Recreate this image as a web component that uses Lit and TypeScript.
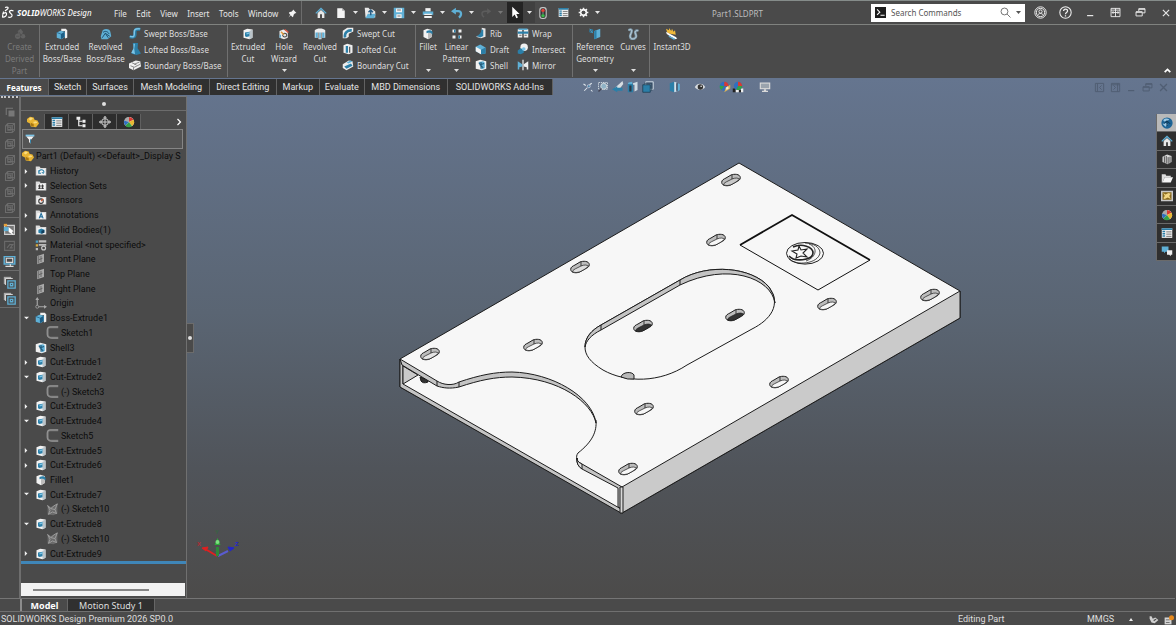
import { LitElement, html, css, svg, nothing } from "lit";
import { customElement, property } from "lit/decorators.js";
import { classMap } from "lit/directives/class-map.js";

const B = "#5fb0d6";
const D = "#2b7fa8";
const W = "#e8e8e8";

const folder = (inner: unknown) => svg`
  <path fill="#dcdcdc" d="M1 2h5l1.500 2H15v10H1z"/>
  <path fill="#f6f6f6" d="M3 5.500h10.500v7.500H3z"/>${inner}`;

const ICONS: Record<string, unknown> = {
  home: svg`<path fill=${W} d="M3.500 8 8 4l4.500 4v6.500h-9z"/><path fill="#4a4a4a" d="M6.700 9.500h2.600v5H6.700z"/><path fill="none" stroke=${B} stroke-width="1.800" d="M1 8.500 8 2l7 6.500"/>`,
  page: svg`<path fill="#f4f4f4" d="M3 1.500h6.500l3.500 3.500v9.500H3z"/><path fill="#a8a8a8" d="M9.500 1.500v3.500H13z"/>`,
  open: svg`<path fill=${W} d="M1 1h5l1.500 2H11l4 3v8H2z"/><path fill=${B} d="M2 15 5 9h10.500l-2 6z"/><path fill="none" stroke="#2b5f86" stroke-width="2" d="M9 11V5M6 7l3-3 3 3"/>`,
  save: svg`<path fill=${B} d="M1 1h14v14H1z"/><path fill="#f2f2f2" d="M4 2h8v5H4zM4.500 9.500h7v5h-7z"/><path stroke="#4a4a4a" stroke-width="1" d="M5.500 4h5M6 12h4"/>`,
  print: svg`<path fill="#f2f2f2" d="M4.500 1.500h7V6h-7z"/><path fill=${B} d="M1 6h14v4.500H1z"/><path fill="#f2f2f2" d="M3 9h10v1.500H3zM3 12h10v2.500H3z"/>`,
  undo: svg`<path fill="none" stroke=${B} stroke-width="3" d="M4 5.500h5.500c5 0 5 6 1 8.500"/><path fill=${B} d="M0 5.500 6.500 1v9z"/>`,
  redo: svg`<path fill="none" stroke="#5c5c5c" stroke-width="2" d="M12 5.500H6.500c-5 0-5 6-1 8"/><path fill="#5c5c5c" d="M15 5.500 9.500 1.500v8z"/>`,
  cursor: svg`<path fill="#fff" d="M4 1v12.500l3-3 2 4.500 2-1-2-4.300h4z"/>`,
  traffic: svg`<rect x="3" y="0" width="10" height="16" rx="4" fill="#c4c4c4"/><rect x="4.500" y="1.500" width="7" height="13" rx="3" fill="#333"/><circle cx="8" cy="4.500" r="2.300" fill="#e04038"/><circle cx="8" cy="8" r="1.200" fill="#777"/><circle cx="8" cy="11.600" r="2.300" fill="#3bb54a"/>`,
  list: svg`<path fill="#f0f0f0" d="M1 1.500h14v13H1z"/><path fill=${D} d="M1 1.500h14v2.500H1zM2 5h3.500v2H2zM2 8h3.500v2H2zM2 11h3.500v2H2z"/><path stroke="#555" d="M7 6.500H14M7 9.500H14M7 12.500H14"/>`,
  gear: svg`<circle cx="8" cy="8" r="4" fill="none" stroke="#f4f4f4" stroke-width="2.600"/><path stroke="#f4f4f4" stroke-width="2.200" d="M8 1v3M8 12v3M1 8h3M12 8h3M3 3l2 2M11 11l2 2M13 3l-2 2M5 11l-2 2"/><circle cx="8" cy="8" r="2.600" fill="#4a4a4a"/>`,
  pin: svg`<path fill="#f4f4f4" d="m9 1 6 6-1.500.7-1-.2-2.500 2.500-.5 3L8 14.500 5 11l-4 4 3-5L1.500 7l1.500-1.500 3-.5L8.500 2.500z"/>`,
  user: svg`<g fill="none" stroke="#f0f0f0" stroke-width="1.200"><circle cx="8" cy="8" r="7"/><circle cx="8" cy="8" r="5"/><circle cx="8" cy="6.800" r="2"/><path d="M4.500 11.500c1-3 6-3 7 0"/></g>`,
  help: svg`<g fill="none" stroke="#f0f0f0" stroke-width="1.300"><circle cx="8" cy="8" r="7"/><path stroke-width="1.600" d="M5.700 6.300c0-3.300 4.800-3.200 4.800-.3C10.500 8 8 7.800 8 10M8 11.300v1.500"/></g>`,
  min: svg`<path stroke="currentColor" stroke-width="1.800" d="M3 12.500h9"/>`,
  span: svg`<g fill="none" stroke="#f0f0f0" stroke-width="1.300"><path d="M1.500 2h13v12h-13zM8 2v12M3 8h10M5 6 3 8l2 2M11 6l2 2-2 2M1.500 4.500h13"/></g>`,
  restore: svg`<g fill="none" stroke="currentColor" stroke-width="1.400"><path d="M5.500 6V2.500h9v6H11M1.500 7h9v6h-9z"/><path stroke-width="2" d="M5.500 3h9M1.500 7.500h9"/></g>`,
  close: svg`<path fill="none" stroke="currentColor" stroke-width="1.900" d="m3 3 10 10M13 3 3 13"/>`,
  prompt: svg`<path fill="#1d1d1d" d="M0 0h16v16H0z"/><path fill="none" stroke="#fff" stroke-width="1.600" d="m3 3.500 4 4-4 4M8 12h6"/>`,
  search: svg`<g fill="none" stroke="#5a5a5a" stroke-width="1.200"><circle cx="6.500" cy="6.500" r="5"/><path d="m10.300 10.300 5 5"/></g>`,
  up: svg`<path fill="none" stroke="#fff" stroke-width="3" d="m3 11 5-5 5 5"/>`,
  next: svg`<path fill="none" stroke="#fff" stroke-width="2.400" d="m5 2 6 6-6 6"/>`,
  derived: svg`<g fill="#626262"><path d="M5 4 9 1l3 4-1 3-5 1z"/><circle cx="5" cy="11" r="3.600"/><circle cx="12" cy="11" r="3"/></g><path stroke="#505050" fill="none" d="m6 5 5 6M3 11h4"/>`,
  extrude: svg`<path fill="#f0f0f0" d="M7 1h6l2 2v10l-3 1V4H7z"/><path fill=${B} d="m1 6 5-2.500 6 1.500v7l-5 3-6-2z"/><path fill="#1e5e85" d="m6.500 8 5-3v7l-5 3z"/><path fill="none" stroke="#1e5e85" d="m1 6 5.500 2"/>`,
  revolve: svg`<path fill=${B} d="M3 5c0-5 11-5 11 1l1 5-5 4H2l-1-4z"/><path fill="none" stroke="#20506e" stroke-width="1.300" d="M4 6c3-3 7-1 8 2M3 13l4-6 4 6M7 7l6 4"/>`,
  swept: svg`<path fill="none" stroke=${D} stroke-width="4.200" d="M1 13c8 2 7-2 7-5s-1-6 7-5"/><path fill="none" stroke="#7cc4e6" stroke-width="2" d="M1 12.500c7 2 6-2 6-5s0-6 8-5"/>`,
  loft: svg`<path fill=${D} d="M5 0h7l-.5 7 4.500 7-6 2-7-2 3-7z"/><path fill="#7cc4e6" d="M6 1h2L7 8l1 7-5-2 3-6z"/>`,
  boundary: svg`<path fill="#f0f0f0" d="m0 6 9-4 6 1 1 7-10 5-6-3z"/><path fill="none" stroke="#777" stroke-width="1.100" d="m2 9 5 2 8-4M7 7l7-3M6 11v4M4 5l6 3"/>`,
  cut: svg`<path fill="#f2f2f2" d="m2 3 5-2 7 1v11l-4 2-8-2z"/><path fill="#b9c3c9" d="m10 4 4-2v11l-4 2z"/><path fill=${D} d="m4 6 6-1v6l-4 1-2-1z"/><path fill="#7cc4e6" d="m6 6.500 4-1v2l-4 1z"/>`,
  wizard: svg`<path fill="#ececec" d="m2 4 5-2 6 2v9l-5 2-6-2z"/><circle cx="9" cy="9.500" r="3.200" fill="#444"/><circle cx="9" cy="9.500" r="1.800" fill="#e6e6e6"/><path stroke="#e09a3c" stroke-width="2" d="m4 5 4 4"/><path stroke="#d9513c" stroke-width="2" d="m9 2 5 4"/><path stroke=${B} stroke-width="2" d="M3 9v4"/>`,
  revcut: svg`<path fill="#eee" d="M1 3c3-3 11-3 14 0v10h-4V6h-1v9H6V6H5v7H1z"/><path fill=${B} d="M2 6h3v7H2zM11 6h3v7h-3zM7 6h2v8H7z"/>`,
  sweptcut: svg`<path fill="#eee" d="M1 5 7 1h8v5l-6 3v4l-3 2H1z"/><path fill="none" stroke=${D} stroke-width="3.500" d="M4 14C3 8 7 4 13 4.500"/>`,
  loftcut: svg`<path fill="#eee" d="m2 3 5-2 7 2v10l-5 2-7-2z"/><path fill=${D} d="M5 4h3v9H5z"/><path fill="#4a4a4a" d="M9.500 5H11v8H9.500z"/>`,
  boundcut: svg`<path fill="#eee" d="m1 7 8-5 5 1 1 7-9 5-5-3z"/><path fill=${D} d="m3 10 9-4 2 3-8 4z"/><path fill=${B} d="m6 5 5-3 3 1-5 3z"/>`,
  fillet: svg`<path fill="#f2f2f2" d="m2 3 5-2 6 1.500v9.500l-5 3-6-3z"/><path fill="#bdbdbd" d="m8 7 5-3v8l-5 3z"/><path fill=${D} d="M6 4c4-2 7-1 8 1v4c-2-3-4-3-8-2z"/>`,
  linear: svg`<g fill="#f0f0f0"><path d="M2 2h4v4H2zM10 2h4v4h-4zM2 10h4v4H2zM10 10h4v4h-4z"/></g><g fill=${D}><path d="M4 2h2v4H4zM10 10h2v4h-2z"/></g>`,
  rib: svg`<path fill="#e6e6e6" d="m9 1 5 1v11l-6 2-7-2 8-2z"/><path fill=${D} d="M2 12C7 10 8 7 9 3l2 1v8l-4 2z"/>`,
  draft: svg`<path fill=${B} d="m1 5 6-3 7 4v8l-6 1-7-4z"/><path fill="#f2f2f2" d="m1 5 7 4v6l-7-4z"/><path fill=${D} d="m8 9 6-3v8l-6 1z"/>`,
  shell: svg`<path fill="#f0f0f0" d="m1 3 6-2 8 2v10l-6 2-8-2z"/><path fill=${B} d="m5 4 6-1 2 2v7l-4 2z"/><path fill="none" stroke="#225a7a" stroke-width="1.400" d="m5 5 6 7M8 4v9M6 8l6-2"/>`,
  wrap: svg`<path fill="#eee" d="M1 3h6v11H1zM9 3h6v11H9z"/><path fill=${D} d="M1 6h14v3H1z"/><path stroke="#333" fill="none" d="M3 11h3M10 11h3"/><path fill=${B} d="M2 2h12v2H2z"/>`,
  intersect: svg`<circle cx="9.500" cy="5.500" r="5" fill="#f0f0f0"/><path fill=${D} d="m1 10 4-3 4 2v4l-4 2-4-1z"/><circle cx="9" cy="8" r="2.400" fill="#7cc4e6"/>`,
  mirror: svg`<path stroke="#f0f0f0" stroke-width="1.600" d="M8 1v14"/><path fill=${B} d="M1 3l6 4v3l-4 1v3H1z"/><path fill="#eee" d="M15 3 9 7v3l4 1v3h2z"/>`,
  refgeo: svg`<path fill=${B} d="m7 4 8-3v11l-8 3z"/><path fill=${D} d="m7 4 3-1v11l-3 1z"/><circle cx="3" cy="4" r="2" fill="none" stroke=${D} stroke-width="1.500"/><path stroke=${B} d="M1 1l4 6"/>`,
  curves: svg`<path fill="none" stroke="#7d97a8" stroke-width="3.400" d="M2 3c5-3 5 1 3 5s0 8 5 6 0-7 1-9 3-2 4-1"/><path fill="none" stroke="#bdd3de" stroke-width="1.200" d="M2 3c5-3 5 1 3 5s0 8 5 6 0-7 1-9 3-2 4-1"/>`,
  instant: svg`<path fill="#f0b93a" d="M0 1 4 3V0l3 4 1-3 2 4 2-2 1 6L2 7z"/><path fill="#fff" d="m0 5 13 7 2 2-3 1L1 8z"/><path fill=${B} d="m3 10 9 4-1 2-7-4z"/>`,
  zoomfit: svg`<path fill="none" stroke="#e0e8ee" stroke-width="1.400" d="m3 13 4-4M2 4l3 2M12 12l2 2M13 3l-3 2"/><circle cx="9" cy="7" r="2" fill="#4a86a8" stroke="#ccd"/>`,
  zoomarea: svg`<path fill="none" stroke="#cfd8df" stroke-dasharray="2 1" stroke-width="1.200" d="M2 2h12v9H2z"/><circle cx="9" cy="7" r="4" fill="#8fb2c6" stroke="#e4e4e4"/><path stroke="#445" stroke-width="2" d="m6 10-4 4"/>`,
  prev: svg`<path fill="#d7dde2" d="m14 0-10 9 5 3 6-8z"/><path fill=${D} d="m0 11 7-4v2h7v4H7v2z"/>`,
  section: svg`<path fill=${D} d="M1 4h7v11H1z"/><path fill="#2a3a48" d="M3 6h3v8H3z"/><path fill="#cfdce4" d="M8 3l6-2v11l-4 2V5H8z"/><path fill=${B} d="m2 2 5-1v3H1z"/>`,
  orient: svg`<path fill="none" stroke="#cfdce4" stroke-width="1.200" d="M5 1h10v10H5z"/><path fill=${D} d="M1 5h10v10H1z"/><path stroke="#1c3a4e" fill="none" d="M1 5h10v10H1zM3 3h10v10"/>`,
  display: svg`<path fill=${D} d="m1 3 6-2v14l-6-2z"/><path fill="#cfe4ef" d="M7 1l3 1v12l-3 1z"/><path fill="#223" d="M10 3h1.500v10H10z"/><path fill=${B} d="m11.500 3 3 1v8l-3 2z"/>`,
  eye: svg`<path fill="#d8dce0" d="M1 8c3-6 11-6 14 0-3 5-11 5-14 0z"/><circle cx="8.500" cy="8" r="3.600" fill="#333"/><circle cx="9.500" cy="7" r="1" fill="#fff"/>`,
  ball: svg`<circle cx="8" cy="8" r="6.800" fill="#f2f2f2"/><path fill="#d83a33" d="M8 8V1.200A6.800 6.800 0 0 1 14 5z"/><path fill="#e8b832" d="M8 8l6-3a6.800 6.800 0 0 1-2 8.500z"/><path fill="#35a046" d="m8 8 4 5.500a6.800 6.800 0 0 1-9-1z"/><path fill="#2f6fc0" d="M8 8l-5 4.500A6.800 6.800 0 0 1 1.500 6z"/><path fill="#222" d="M8 8 1.500 6A6.800 6.800 0 0 1 8 1.200z" opacity=".35"/>`,
  scene: svg`<path fill="#222" d="M1 10h4v5H1zM9 12h3v3H9z"/><path fill="#eee" d="M5 11h4v4H5zM12 10h3v5h-3z"/><circle cx="8" cy="6.500" r="5.500" fill="#2f6fc0"/><path fill="#d83a33" d="M8 6.500V1a5.500 5.500 0 0 1 5.500 5.500z"/><path fill="#35a046" d="M8 6.500h5.500a5.500 5.500 0 0 1-8 5z"/>`,
  appear: svg`<circle cx="7" cy="7" r="6" fill="#2f6fc0"/><path fill="#d83a33" d="M7 7V1a6 6 0 0 1 6 6z"/><path fill="#35a046" d="M7 7 3 12a6 6 0 0 1-2-6z"/><path fill="#d7b25a" d="m7 15 2-6 6-4v5z"/><path fill="#f2e9d0" d="m9 9 3-2 1 3-3 2z"/>`,
  monitor: svg`<path fill="#d9d9d9" d="M1 2h14v9H1z"/><path fill="#9aa3ad" d="M2.500 3.500h11v6h-11z"/><path fill="#d9d9d9" d="M6.500 11h3v2h-3zM4 13h8v1.500H4z"/>`,
  dockl: svg`<path fill="none" stroke="currentColor" stroke-width="1.400" d="M2 2h12v12H2zM5 2v12M11 5 8 8l3 3"/>`,
  dockr: svg`<path fill="none" stroke="currentColor" stroke-width="1.400" d="M2 2h12v12H2zM11 2v12M5 5l3 3-3 3M2 4h12"/>`,
  part: svg`<path fill="#e8b432" d="m0 4 4-3 5 1 1 3 4 1 2 4-4 5-7-1-1-4-4-2z"/><path fill="#f9dc82" d="m2 4 3-2 3 1-3 3zM8 8l4-1 2 2-4 1z"/><path fill="#a97712" d="m5 9 4 2v3l-4-1z"/>`,
  tree: svg`<path fill="none" stroke="#eee" stroke-width="1.600" d="M5 4v9h5M5 7h5"/><path fill="#eee" d="M2 1h5v4H2zM10 5h4v4h-4zM10 11h4v4h-4z"/>`,
  target: svg`<g fill="none" stroke="#cfcfcf" stroke-width="1.300"><circle cx="8" cy="8" r="4.500"/><path d="M8 .5v15M.5 8h15M8 .5 10 3M8 .5 6 3M8 15.500 10 13M8 15.500 6 13M.5 8 3 6M.5 8 3 10M15.500 8 13 6M15.500 8 13 10"/></g>`,
  funnel: svg`<path fill="#7cc4e6" d="M1 1h14v3H1z"/><path fill="#f4f4f4" d="M2 4h12L9.500 9v6l-3-2V9z"/><path fill=${D} d="M9.500 9v6l-1.500-1V7z"/>`,
  history: folder(svg`<path fill="none" stroke=${D} stroke-width="1.400" d="M5 11c0-6 7-6 7-1M12 11l-3-1M5 7v4h3"/>`),
  selset: folder(svg`<path fill="none" stroke="#333" stroke-width="1.200" d="M4 8h8M4 11h8M6 6v6M10 6v6"/>`),
  sensors: folder(svg`<circle cx="8" cy="9.500" r="3" fill="none" stroke="#333" stroke-width="1.400"/><path stroke="#d8532c" stroke-width="1.600" d="m8 9.500 3-3"/>`),
  annot: folder(svg`<path fill="none" stroke="#246f9c" stroke-width="1.500" d="m5.500 12.500 2.700-6.500 2.700 6.500M6.500 10.500h3.400"/>`),
  solid: folder(svg`<path fill=${D} d="m4.500 7.500 4-1.500 4 1.500v4l-4 1.500-4-1.500z"/><path fill="#123e5c" d="m8.500 9 4-1.500v4l-4 1.500z"/>`),
  material: svg`<path fill="#49a0c9" d="M1 2h3v3H1z"/><path fill="#d8a93a" d="M1 7h3v3H1z"/><path fill="#bbb" d="M1 12h3v3H1zM5 1.500H15v3H5zM5 6.500H15v2.500H5z"/><circle cx="11.500" cy="12" r="2.600" fill="#4a4a4a" stroke="#c8c8c8" stroke-width="1.600"/>`,
  plane: svg`<path fill="#a9a9a9" d="m3 4 9-3v11l-9 3z"/><path fill="none" stroke="#5b5b5b" stroke-width="1.100" d="M5 4v10M8 4v8M5 9l5-2"/>`,
  origin: svg`<path fill="none" stroke="#a8a8a8" stroke-width="1.500" d="M3 2v11h10"/><path fill="#a8a8a8" d="m.5 4 2.500-4 2.500 4zM12 10.500l4 2.500-4 2.500z"/><circle cx="3" cy="13" r="2" fill="#4a4a4a" stroke="#a8a8a8"/>`,
  sketch: svg`<path fill="none" stroke="#7e7e7e" stroke-width="2.400" d="M15 1.500H5Q2 1.500 2 5v5q0 4.500 5 4.500h8"/><path fill="none" stroke="#a4a4a4" stroke-width=".8" d="M15 1H5Q1.500 1 1.500 5v5q0 5 5.500 5h8"/>`,
  sketchx: svg`<path fill="#6b6b6b" d="M2 3l4 2 4-2 4-2v12l-5 2-7-1z"/><path fill="none" stroke="#a8a8a8" stroke-width="1" d="m2 3 4 4 3-3 5-3-3 7 2 5-5-2-5 3 2-5zM6 7l5 1"/>`,
  view: svg`<path fill="none" stroke="#6c6c6c" stroke-width="1.400" d="m2 5 3-3h9v9l-3 3H2zM2 5h9v9M11 5l3-3M5 2v8h8M5 7h4v4H5z"/>`,
  viewfull: svg`<path fill="#777" d="M6 6h8v8H6z"/><path fill="none" stroke="#777" stroke-width="1.400" d="M3 12V3h9"/>`,
  pen: svg`<path fill="#777" stroke="#d0d0d0" stroke-width="1.400" d="M2 3h12v11H2z"/><path fill=${B} d="M1 5h6v5H1z"/><path fill="#e9a33c" d="M1 1h4v3H1z"/><path fill="#fff" d="m7 5 6 5-2 1 2 4-6-4z"/>`,
  g2: svg`<path fill="none" stroke="#6a6a6a" stroke-width="1.400" d="M2 3h12v11H2zM5 11l4-5M9 7h3l-3 4h3"/>`,
  screen: svg`<path fill="none" stroke=${B} stroke-width="1.800" d="M1.500 2h13v9h-13z"/><path fill="none" stroke="#ddd" stroke-width="1.400" d="M4 4h8v5H4zM3 14h10M9 11v3"/>`,
  copy: svg`<path fill="#aaa" d="M1 1h9v9H1z"/><path fill="#4a4a4a" d="M3 3h9v9H3z"/><path fill="none" stroke="#ddd" stroke-width="1.200" d="M3 11V3h9"/><path fill="#4a4a4a" stroke=${B} stroke-width="1.600" d="M6 6h9v9H6zM9 9h3v3H9z"/>`,
  globe: svg`<circle cx="8" cy="8" r="7.500" fill="#1d6496"/><path fill="#9cc8e4" d="M3 4c3-3 6-2 8-1L9 5 4 6zM2 9l5-1 2 2-3 3z"/><path fill="none" stroke="#0c3350" stroke-width="1.300" d="m4 9 4-4 4 4M8 5v7"/>`,
  library: svg`<path fill="#d8d8d8" d="m2 5 6-3 6 2v8l-5 3-7-3z"/><path fill="none" stroke="#444" stroke-width="1.200" d="M4.500 4.500V13M7 4v10M9.500 5.500V15M12 5v8"/>`,
  files: svg`<path fill="#dcdcdc" d="M1 3h5l1 2h6v2H5l-3 7H1z"/><path fill="#f4f4f4" d="M5 7h11l-3 7H2z"/>`,
  palette: svg`<path fill="#c8c8c8" d="M0 1h16v14H0z"/><path fill="#8a6a1c" d="M2 3h12v10H2z"/><path fill="#f1d583" d="m3 4 3 2 4-2 3 1-2 3 2 4-4-2-4 2-2-1 2-3z"/>`,
  chat: svg`<path fill=${B} d="M1 2h9v7H6l-2 2V9H1z"/><path fill="#f0f0f0" d="M8 7h7v6h-2v2l-2-2H8z"/>`,
  tag: svg`<path fill="#d0d0d0" d="M1 2h3l2 4 4-2 5 4-6 5-5-1-3-6z"/><path fill="#4a4a4a" d="m7 8 4-2 1 1-4 3z"/>`,
  note: svg`<path fill="#d4d4d4" d="M1 4h11v11H1z"/><path fill="#555" d="M3 7h6v1.500H3zM3 11h6v1.500H3z"/><circle cx="12" cy="4.500" r="4" fill="#e88a1c"/>`,
};

const icon = (name: string, size = 12) =>
  html`<svg class="ic" width=${size} height=${size} viewBox="0 0 16 16" aria-hidden="true">${ICONS[name]}</svg>`;

const caret = html`<svg class="caret" width="5" height="3" viewBox="0 0 5 3" aria-hidden="true"><path fill="currentColor" d="M0 0h5L2.500 3z"/></svg>`;

const base = css`
  :host, * { box-sizing: border-box; }
  button, input { font: inherit; color: inherit; background: none; border: 0; padding: 0; margin: 0; }
  button { display: flex; align-items: center; justify-content: center; white-space: nowrap; }
  .ic, .caret { display: block; flex: none; }
`;

@customElement("title-bar")
class TitleBar extends LitElement {
  static styles = [base, css`
    :host { display: flex; align-items: stretch; height: 25px; flex: none; border-top: 1px solid #858c8a; border-bottom: 1px solid #80827f; color: #e6e6e6; font-size: 8px; }
    .brand { display: flex; align-items: center; gap: 3px; padding-left: 1px; width: 109px; font-style: italic; white-space: nowrap; color: #fff; }
    .menus { display: flex; align-items: center; justify-content: space-between; width: 193px; padding: 2px 4px 0 5px; border-right: 1px solid #6c6c6c; }
    .tools { display: flex; align-items: center; padding-left: 11px; }
    .tool { width: 16px; height: 21px; }
    .tool.last { margin-left: 4px; }
    .drop { width: 13px; height: 21px; }
    .armed { display: flex; background: #242424; height: 21px; width: 28px; }
    .armed .drop { background: #404040; width: 12px; }
    .dim { color: #777; }
    .doc { flex: 1; align-self: center; text-align: center; color: #bdbdbd; padding-top: 2px; }
    .search { display: flex; align-items: center; align-self: center; width: 154px; height: 18px; background: #fff; color: #555; padding: 0 4px; gap: 5px; }
    .search input { flex: 1; min-width: 0; outline: 0; }
    .search input::placeholder { color: #555; opacity: 1; }
    .win { display: flex; align-items: center; padding-left: 3px; margin-right: -2px; }
    .win button { width: 25px; height: 20px; }
  `];
  render() {
    const tool = (n: string, label: string) => html`
      <button class="tool" aria-label=${label}>${icon(n, 12)}</button>
      <button class=${classMap({ drop: true, dim: n === "redo" })} aria-label="${label} options">${caret}</button>`;
    return html`
      <div class="brand">
        <svg width="13" height="14" viewBox="0 0 26 28" aria-hidden="true"><g fill="none" stroke="#fff" stroke-width="2.400"><path d="M8 3c5-2 8 0 5 3l-5 4M2 22c6 1 10-3 9-7-1-3-6-1-8 1M5 11 3 21M25 10c-4-2-9-1-8 2s7 4 5 8c-1 2-5 3-8 2"/></g></svg>
        <span><b>SOLID</b>WORKS Design</span>
      </div>
      <nav class="menus">
        ${["File", "Edit", "View", "Insert", "Tools", "Window"].map((m) => html`<button>${m}</button>`)}
        <button aria-label="Pin menu">${icon("pin", 9)}</button>
      </nav>
      <div class="tools">
        <button class="tool" aria-label="Home">${icon("home", 12)}</button>
        <button class="tool last" aria-label="New">${icon("page", 12)}</button>
        <button class="drop" aria-label="New options">${caret}</button>
        ${tool("open", "Open")}${tool("save", "Save")}${tool("print", "Print")}${tool("undo", "Undo")}${tool("redo", "Redo")}
        <div class="armed">
          <button class="tool" aria-label="Select">${icon("cursor", 13)}</button>
          <button class="drop" aria-label="Select options">${caret}</button>
        </div>
        <button class="tool" aria-label="Rebuild">${icon("traffic", 12)}</button>
        <button class="tool last" aria-label="File properties">${icon("list", 11)}</button>
        <button class="tool last" aria-label="Options">${icon("gear", 11)}</button>
        <button class="drop" aria-label="Options menu">${caret}</button>
      </div>
      <div class="doc">Part1.SLDPRT</div>
      <div class="search">
        ${icon("prompt", 11)}
        <input type="text" aria-label="Search Commands" placeholder="Search Commands">
        <button aria-label="Search">${icon("search", 11)}</button>
        <button aria-label="Search options">${caret}</button>
      </div>
      <div class="win">
        ${[["user", "Account"], ["help", "Help"], ["min", "Minimize"], ["span", "Span displays"], ["restore", "Restore"], ["close", "Close"]].map(
          ([n, l]) => html`<button aria-label=${l}>${icon(n, n === "close" ? 10 : n === "user" || n === "help" ? 13 : 11)}</button>`)}
      </div>`;
  }
}

type Big = { icon: string; lines: string[]; width: number; drop?: boolean; off?: boolean };
type Group = { big: Big[]; cols: { width: number; items: [string, string][] }[] };

const GROUPS: Group[] = [
  { big: [{ icon: "derived", lines: ["Create", "Derived", "Part"], width: 39, off: true }], cols: [] },
  { big: [{ icon: "extrude", lines: ["Extruded", "Boss/Base"], width: 44 }, { icon: "revolve", lines: ["Revolved", "Boss/Base"], width: 43 }],
    cols: [{ width: 100, items: [["swept", "Swept Boss/Base"], ["loft", "Lofted Boss/Base"], ["boundary", "Boundary Boss/Base"]] }] },
  { big: [{ icon: "cut", lines: ["Extruded", "Cut"], width: 40 }, { icon: "wizard", lines: ["Hole", "Wizard"], width: 32, drop: true }, { icon: "revcut", lines: ["Revolved", "Cut"], width: 40 }],
    cols: [{ width: 75, items: [["sweptcut", "Swept Cut"], ["loftcut", "Lofted Cut"], ["boundcut", "Boundary Cut"]] }] },
  { big: [{ icon: "fillet", lines: ["Fillet"], width: 24, drop: true }, { icon: "linear", lines: ["Linear", "Pattern"], width: 33, drop: true }],
    cols: [{ width: 42, items: [["rib", "Rib"], ["draft", "Draft"], ["shell", "Shell"]] },
      { width: 57, items: [["wrap", "Wrap"], ["intersect", "Intersect"], ["mirror", "Mirror"]] }] },
  { big: [{ icon: "refgeo", lines: ["Reference", "Geometry"], width: 44, drop: true }, { icon: "curves", lines: ["Curves"], width: 32, drop: true }], cols: [] },
];

@customElement("command-ribbon")
class CommandRibbon extends LitElement {
  static styles = [base, css`
    :host { display: flex; flex: none; height: 53px; font-size: 8px; color: #dedede; }
    .group { display: flex; border-right: 1px solid #707070; margin-bottom: 1px; }
    .big { flex-direction: column; justify-content: flex-start; padding-top: 3px; position: relative; line-height: 12px; }
    .big .ic { margin-bottom: 1px; }
    .big .caret { position: absolute; bottom: 5px; }
    .off { color: #7b7b7b; }
    .col { display: flex; flex-direction: column; }
    .small { height: 16px; gap: 3px; justify-content: flex-start; padding-left: 2px; }
    .fold { margin-left: auto; align-self: flex-end; padding: 0 4px 3px 0; }
  `];
  big(b: Big) {
    return html`<button class=${classMap({ big: true, off: !!b.off })} ?disabled=${b.off} style="width:${b.width}px">
      ${icon(b.icon, 12)}${b.lines.map((l) => html`<span>${l}</span>`)}${b.drop ? caret : nothing}</button>`;
  }
  render() {
    return html`
      ${GROUPS.map((g) => html`<div class="group">
        ${g.big.map((b) => this.big(b))}
        ${g.cols.map((c) => html`<div class="col" style="width:${c.width}px">
          ${c.items.map(([n, l]) => html`<button class="small">${icon(n, 12)}<span>${l}</span></button>`)}</div>`)}
      </div>`)}
      ${this.big({ icon: "instant", lines: ["Instant3D"], width: 44 })}
      <button class="fold" aria-label="Collapse ribbon">${icon("up", 9)}</button>`;
  }
}

@customElement("command-tabs")
class CommandTabs extends LitElement {
  static styles = [base, css`
    :host { display: flex; align-items: stretch; flex: none; height: 18px; font-size: 9px; color: #e4e4e4; }
    .tabs { display: flex; padding-top: 1px; padding-bottom: 1px; }
    .tab { background: #303030; border-right: 1px solid #626262; padding: 0 5px; font-family: Roboto, "Noto Sans", sans-serif; }
    .tab.on { background: #4a4a4a; color: #fff; font-weight: 700; font-family: "Noto Sans", sans-serif; font-size: 8px; }
    .hud { display: flex; align-items: center; padding-left: 28px; }
    .hud button { width: 15px; }
    .hud .wide { width: 25px; justify-content: flex-end; }
    .win { display: flex; align-items: center; margin-left: auto; gap: 5px; padding-right: 7px; color: #505e73; }
  `];
  render() {
    const tabs: [string, number][] = [["Features", 49], ["Sketch", 38], ["Surfaces", 46], ["Mesh Modeling", 76], ["Direct Editing", 67], ["Markup", 43], ["Evaluate", 45], ["MBD Dimensions", 83], ["SOLIDWORKS Add-Ins", 105]];
    const hud: [string, string, boolean][] = [["zoomfit", "Zoom to fit", false], ["zoomarea", "Zoom to area", false], ["prev", "Previous view", false], ["section", "Section view", false], ["orient", "View orientation", false], ["display", "Display style", true], ["eye", "Hide or show items", true], ["appear", "Edit appearance", true], ["scene", "Apply scene", false], ["monitor", "View settings", true]];
    return html`
      <div class="tabs" role="tablist">${tabs.map(([t, w], i) => html`<button role="tab" aria-selected=${i === 0} class=${classMap({ tab: true, on: i === 0 })} style="min-width:${w}px">${t}</button>`)}</div>
      <div class="hud">${hud.map(([n, l, w]) => html`<button class=${classMap({ wide: w })} aria-label=${l}>${icon(n, 12)}</button>`)}</div>
      <div class="win">${[["dockl", "Dock left"], ["dockr", "Dock right"], ["min", "Minimize document"], ["restore", "Restore document"], ["close", "Close document"]].map(([n, l]) => html`<button aria-label=${l}>${icon(n, 11)}</button>`)}</div>`;
  }
}

@customElement("side-rail")
class SideRail extends LitElement {
  static styles = [base, css`
    :host { display: flex; flex-direction: column; flex: none; width: 21px; background: #4a4a4a; border-right: 2px solid #6e6e6e; }
    .grip { height: 4px; margin: 0 1px 4px; border-top: 2px dotted #c8c8c8; }
    .set { display: flex; flex-direction: column; padding-bottom: 1px; border-bottom: 1px solid #6c6c6c; margin-bottom: 3px; }
    .set button { height: 16px; }
  `];
  render() {
    const sets = [["viewfull", "view", "view", "view", "view", "view", "view"], ["pen", "g2", "screen"], ["copy", "copy"]];
    return html`<div class="grip"></div>${sets.map((s, i) => html`<div class="set">${s.map((n, j) => html`<button aria-label="View tool ${i + 1}.${j + 1}">${icon(n, i === 0 ? 12 : 13)}</button>`)}</div>`)}`;
  }
}

type Row = [label: string, icon: string, arrow?: string, depth?: number];
const ROWS: Row[] = [
  ["History", "history", "r"], ["Selection Sets", "selset", "r"], ["Sensors", "sensors"], ["Annotations", "annot", "r"],
  ["Solid Bodies(1)", "solid", "r"], ["Material <not specified>", "material"], ["Front Plane", "plane"], ["Top Plane", "plane"],
  ["Right Plane", "plane"], ["Origin", "origin"], ["Boss-Extrude1", "extrude", "d"], ["Sketch1", "sketch", "", 1], ["Shell3", "shell"],
  ["Cut-Extrude1", "cut", "r"], ["Cut-Extrude2", "cut", "d"], ["(-) Sketch3", "sketch", "", 1], ["Cut-Extrude3", "cut", "r"],
  ["Cut-Extrude4", "cut", "d"], ["Sketch5", "sketch", "", 1], ["Cut-Extrude5", "cut", "r"], ["Cut-Extrude6", "cut", "r"],
  ["Fillet1", "fillet"], ["Cut-Extrude7", "cut", "d"], ["(-) Sketch10", "sketchx", "", 1], ["Cut-Extrude8", "cut", "d"],
  ["(-) Sketch10", "sketchx", "", 1], ["Cut-Extrude9", "cut", "r"],
];

@customElement("feature-tree")
class FeatureTree extends LitElement {
  static styles = [base, css`
    :host { display: flex; flex-direction: column; flex: none; width: 166px; background: #4a4a4a; border-right: 1px solid #707070; font-size: 9px; color: #0c0c0c; position: relative; border-top: 1px solid #777; }
    .knob { height: 14px; display: flex; align-items: center; justify-content: center; border-bottom: 1px solid #6c6c6c; }
    .dot { width: 4px; height: 4px; border-radius: 2px; background: #e0e0e0; }
    .tabs { display: flex; height: 18px; padding-top: 3px; }
    .tabs button { width: 24px; background: #2d2d2d; border-right: 1px solid #606060; }
    .tabs .on { background: #4a4a4a; }
    .tabs .more { margin-left: auto; width: 14px; background: none; border: 0; }
    .filter { display: flex; align-items: center; height: 20px; margin: 0 3px 0 1px; border: 1px solid #858585; background: #545454; padding-left: 2px; gap: 4px; }
    .filter input { flex: 1; min-width: 0; outline: 0; color: #eee; }
    .tree { flex: 1; display: grid; grid-auto-rows: 1fr; margin: 0; padding: 0; list-style: none; overflow: hidden; font-family: Roboto, "Noto Sans", sans-serif; }
    .row { display: flex; align-items: center; gap: 3px; min-height: 0; padding-left: 3px; white-space: nowrap; line-height: 14px; }
    .root { padding-left: 1px; gap: 2px; }
    .arrow { width: 5px; height: 5px; margin-right: 3px; flex: none; }
    .child { padding-left: 15px; gap: 2px; }
    .roll { height: 3px; background: #3f86b8; }
    .rest { height: 19px; }
    .scroll { height: 13px; background: #f2f2f2; display: flex; align-items: center; padding-left: 12px; margin-right: 1px; }
    .thumb { width: 116px; height: 2px; background: #858585; }
    .foot { height: 2px; }
    .handle { position: absolute; right: -8px; top: 226px; width: 7px; height: 30px; background: #4a4a4a; border: 1px solid #6c6c6c; border-left: 0; }
  `];
  arrow(a?: string) {
    return html`<svg class="arrow" viewBox="0 0 6 6" aria-hidden="true">${a === "r" ? svg`<path fill="#f0f0f0" d="M1 0l3 3-3 3z"/>` : a === "d" ? svg`<path fill="#f0f0f0" d="M0 1h6L3 4z"/>` : nothing}</svg>`;
  }
  render() {
    return html`
      <div class="knob"><span class="dot"></span></div>
      <div class="tabs">
        <button class="on" aria-label="Feature tree">${icon("part", 12)}</button>
        <button aria-label="Properties">${icon("list", 12)}</button>
        <button aria-label="Configurations">${icon("tree", 12)}</button>
        <button aria-label="Dimensions">${icon("target", 12)}</button>
        <button aria-label="Appearances">${icon("ball", 12)}</button>
        <button class="more" aria-label="More">${icon("next", 8)}</button>
      </div>
      <label class="filter">${icon("funnel", 10)}<input type="text" aria-label="Filter"></label>
      <ul class="tree">
        <li class="row root">${icon("part", 12)}<span>Part1 (Default) &lt;&lt;Default&gt;_Display S</span></li>
        ${ROWS.map(([l, n, a, d]) => html`<li class=${classMap({ row: true, child: !!d })}>${this.arrow(a)}${icon(n, d ? 13 : 12)}<span>${l}</span></li>`)}
      </ul>
      <div class="roll"></div><div class="rest"></div>
      <div class="scroll"><div class="thumb"></div></div><div class="foot"></div>
      <button class="handle" aria-label="Collapse panel"><span class="dot"></span></button>`;
  }
}

const SLOTS: [number, number, string][] = [
  [731, 180, "#c9c9c9"], [716, 240, "#f7f7f7"], [580, 267, "#dedede"], [430, 354, "#e4e4e4"], [533, 345, "#f7f7f7"],
  [827, 304, "#f7f7f7"], [930, 295, "#d0d0d0"], [779, 382, "#f7f7f7"], [644, 409, "#f7f7f7"], [628, 469, "#f7f7f7"],
  [643, 326, "#333"], [735, 315, "#333"],
];

@customElement("model-view")
class ModelView extends LitElement {
  @property() label = "Part1";
  static styles = [base, css`
    :host { display: block; flex: 1; min-width: 0; position: relative; overflow: hidden; }
    .scene { display: block; width: 100%; height: 100%; }
    .axis { font: 700 6px "Noto Sans", sans-serif; }
    .pane { position: absolute; right: 0; top: 18px; width: 20px; height: 147px; display: grid; grid-auto-rows: 1fr; background: #6a6a6a; gap: 1px; padding: 0 0 1px 1px; }
    .pane button { background: #2f2f2f; }
    .pane .on { background: #b9b9b9; }
  `];
  render() {
    const edge = "#1c1c1c";
    return html`
      <svg class="scene" viewBox="187 96 989 502" preserveAspectRatio="xMidYMid meet" role="img" aria-label=${this.label}>
        <g stroke=${edge} stroke-width="1" stroke-linejoin="round">
          <path fill="#f7f7f7" d="M739 163 960 291v27L622 513 400 387v-28z"/>
          <path fill="#cacaca" d="M622 487 960 291v27L622 513z"/>
          <path fill="#c4c4c4" d="M400 359v28l221 126v-4L403 384v-19z"/>
          <path fill="#c9c9c9" d="M403 366l15 9-15 9z"/>
          <path fill="#333" d="M420 377l8 3v2q-5 2-7-1z"/>
          <path fill="#c4c4c4" d="M400 359 437 381C443 385 453 386 459 382 C480 375 495 372 512 372 C552 373 592 396 596 423 C592 403 560 378 512 377 C495 377 480 380 459 387 C450 389 443 388 437 386L402 365z"/>
          <path fill="none" d="M437 381v5M459 382v5"/>
          <path fill="none" d="M596 420C597 432 592 442 578 453 575 457 577 462 582 464"/>
          <path fill="#c4c4c4" d="M577 458C577 462 580 463 582 464L622 487v22l-4-2v-19L582 469Q576 465 577 458z"/>
          <path fill="#e2e2e2" d="M577 458C577 462 580 463 582 464v5Q576 465 577 458z"/>
          <path fill="#d8d8d8" d="M620 487h3v26h-3z"/>
        </g>
        <g fill="none" stroke=${edge} stroke-width="1">
          <path d="M585 347C585 337 592 330 601 325L680 280C708 263 752 267 769 287 782 305 770 320 752 329L687 365C660 383 626 383 603 370 590 362 585 355 585 347z"/>
          <path fill="#c4c4c4" d="M585 347C585 337 592 330 601 325L680 280C708 263 752 267 769 287Q775 295 775 303C771 278 728 262 680 285L601 330C591 335 586 341 585 347z"/>
          <path d="M601 325v5M680 280v5"/>
          <path fill="#b8b8b8" d="M621 377c1-5 11-6 13-2v4q-6 1-13-2z"/>
        </g>
        ${SLOTS.map(([x, y, floor]) => svg`<g transform="translate(${x} ${y})" stroke="#1c1c1c" stroke-width="1">
          <path fill="#bcbcbc" d="M-9.300 2.500C-9.500 0-7-1-5-2L0-5C3-6.200 9-6.200 9.300-2.500 9.500 0 7 1 5 2L0 4.800C-3 6.400-9 6.200-9.300 2.500z"/>
          <path fill=${floor} stroke-width=".7" d="M-7.500 5C-7.500 3-5 2-3 1L1-1Q6-3 8.500-.8L5 2 0 4.800Q-4 6.300-7.500 5z"/>
          <path fill="none" stroke-width=".8" d="M1-5.300v4.300"/></g>`)}
        <path fill="none" stroke="#111" stroke-width="1" d="M740 245 818 290 870 260"/>
        <path fill="none" stroke="#111" stroke-width="1.800" d="M740 245 792 215 870 260"/>
        <g fill="none" stroke="#222" stroke-width="1">
          <ellipse cx="805" cy="253.300" rx="18.500" ry="10.800"/>
          <path stroke-width=".8" d="M789 259C796 266 818 264 820 253 820 247 813 243 805 243"/>
          <path stroke-width="1.600" d="M789 256C794 262 812 261 813 253 813 247 802 243 793 247"/>
          <path stroke-width=".8" d="M809 244C818 247 817 257 806 261"/>
          <path fill="#fafafa" stroke-width="1.100" d="m799 246 2 4 6-1-4 4 4 4-6-1-5 2 1-4-5-3 6-1z"/>
        </g>
        <g stroke-width="2" fill="none">
          <path stroke="#e02020" d="m217 556-10-6"/><path fill="#e02020" d="m202 548 6-1-2 4z" stroke="#e02020" stroke-width="1"/>
          <path stroke="#5a5cd0" d="m218 556 10-5"/><path fill="#2326c8" d="m234 548-6-1 2 4z" stroke="#2326c8" stroke-width="1"/>
          <path stroke="#2c8a38" stroke-width="3" d="M217.500 556v-9"/><path fill="#2ea83a" d="M217.500 538l3 7h-6z"/><circle cx="217.500" cy="542" r="2" fill="#7be07f"/>
        </g>
        <text class="axis" x="197" y="546" fill="#a83038">X</text>
        <text class="axis" x="215" y="534" fill="#3c6045">Y</text>
        <text class="axis" x="235" y="546" fill="#2326c8">Z</text>
      </svg>
      <div class="pane">
        ${[["globe", "Platform"], ["home", "Resources"], ["library", "Design library"], ["files", "File explorer"], ["palette", "View palette"], ["ball", "Appearances"], ["list", "Custom properties"], ["chat", "Forum"]].map(
          ([n, l], i) => html`<button class=${classMap({ on: i === 0 })} aria-label=${l}>${icon(n, 12)}</button>`)}
      </div>`;
  }
}

@customElement("status-area")
class StatusArea extends LitElement {
  static styles = [base, css`
    :host { display: block; flex: none; color: #dedede; font-size: 9px; }
    .sheets { display: flex; height: 14px; border-top: 1px solid #757575; border-bottom: 1px solid #707070; padding-left: 20px; margin-right: 1px; }
    .sheets button { width: 87px; background: #303030; border-right: 1px solid #666; }
    .sheets .on { width: 48px; background: #4a4a4a; font-weight: 700; color: #fff; border-left: 2px solid #8c8c8c; }
    .bar { display: flex; align-items: center; height: 13px; padding: 2px 2px 0 1px; line-height: 11px; font-family: Roboto, "Noto Sans", sans-serif; white-space: nowrap; }
    .mode { margin-left: auto; width: 129px; }
    .units { width: 42px; justify-content: flex-start; }
    .flip { width: 20px; justify-content: flex-start; }
    .end { display: flex; gap: 5px; }
  `];
  render() {
    return html`
      <div class="sheets"><button class="on">Model</button><button>Motion Study 1</button></div>
      <footer class="bar">
        <span>SOLIDWORKS Design Premium 2026 SP0.0</span>
        <span class="mode">Editing Part</span>
        <button class="units">MMGS</button>
        <button class="flip" aria-label="Unit system"><svg width="4" height="3" viewBox="0 0 4 3"><path fill="#eee" d="M0 3h4L2 0z"/></svg></button>
        <span class="end">${icon("tag", 10)}${icon("note", 10)}</span>
      </footer>`;
  }
}

@customElement("app-root")
class AppRoot extends LitElement {
  static styles = css`
    :host { display: flex; flex-direction: column; height: 100vh; overflow: hidden; background: #4a4a4a; font-family: "Noto Sans", "Open Sans", sans-serif; }
    .work { flex: 1; min-height: 0; display: flex; flex-direction: column; background: linear-gradient(#65758f, #5a6573 45%, #50545a 75%, #4c4b4a); }
    .body { flex: 1; min-height: 0; display: flex; }
  `;
  render() {
    return html`
      <title-bar></title-bar>
      <command-ribbon></command-ribbon>
      <div class="work">
        <command-tabs></command-tabs>
        <div class="body">
          <side-rail></side-rail>
          <feature-tree></feature-tree>
          <model-view></model-view>
        </div>
      </div>
      <status-area></status-area>`;
  }
}
